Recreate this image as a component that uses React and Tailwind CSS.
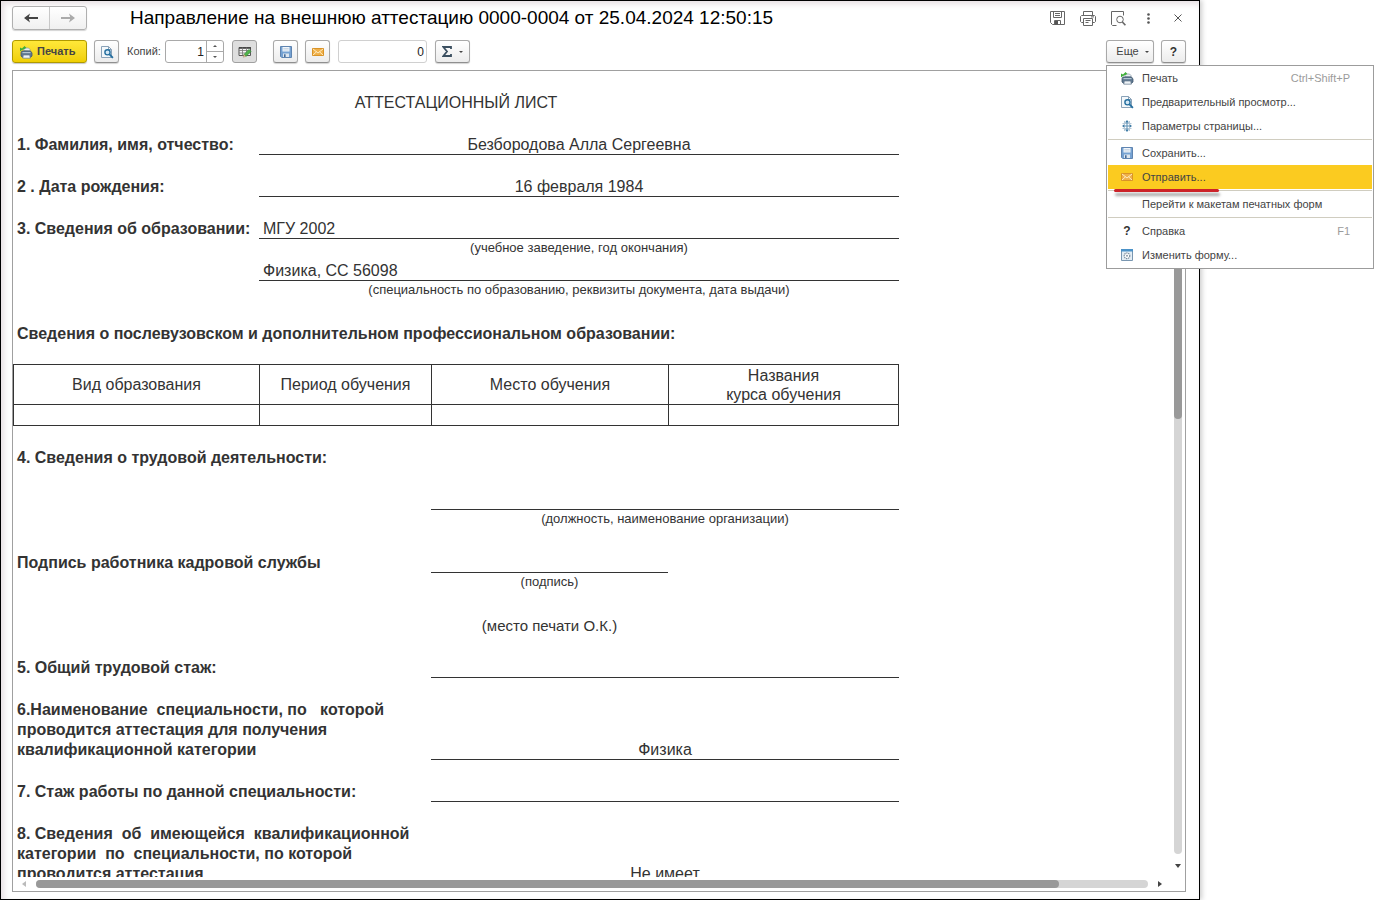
import { useState } from "react";

const toolButton =
  "flex h-[23px] items-center justify-center rounded-[3px] border border-[#a9a9a9] border-b-[#8f8f8f] bg-gradient-to-b from-white to-[#ececec] shadow-[0_1px_1px_#d4d4d4]";

function PrintIcon() {
  return (
    <svg width="14" height="14" viewBox="0 0 14 14" aria-hidden="true">
      <path d="M5 5.5V3h4.5L11 4.5v1.5z" fill="#e8eef3" stroke="#8a99a8" strokeWidth=".7" />
      <path d="M3 6h8.5l1.5 2v3l-1.4 1.3H3.4L2 11V7.5z" fill="#5f7890" stroke="#41586e" strokeWidth=".8" />
      <path d="M3.5 7.6h8" stroke="#b9cad8" strokeWidth="1.1" />
      <path d="M4.3 10h6.4l.6 3.2H3.8z" fill="#eef3f7" stroke="#64798d" strokeWidth=".7" />
      <path d="M1 2.6v4l1.6-1.3L7.4 3 5.6 1 3 3.6z" fill="#3fae3a" />
    </svg>
  );
}

function PreviewIcon() {
  return (
    <svg width="14" height="14" viewBox="0 0 14 14" aria-hidden="true">
      <path d="M1.5 1.5h7l3 3v8h-10z" fill="#f4f8fb" stroke="#8aa2b8" />
      <path d="M8.5 1.5v3h3" fill="none" stroke="#8aa2b8" />
      <circle cx="7.5" cy="7.3" r="2.6" fill="#d4e8f6" stroke="#256f9f" strokeWidth="1.4" />
      <path d="m9.5 9.4 3.4 3.4" stroke="#256f9f" strokeWidth="1.9" />
    </svg>
  );
}

function PageSetupIcon() {
  return (
    <svg width="12" height="14" viewBox="0 0 12 14" aria-hidden="true">
      <path d="M1.5 4.5h9M1.5 9.5h9M3.5 2v10M8.5 2v10" stroke="#b4c7d6" />
      <path d="M6 2v10M2 7h8" stroke="#5b8fb4" />
      <path d="m6 1 2 2.5H4zM6 13l2-2.5H4zM1 7l2-1.6v3.2zM11 7 9 5.4v3.2z" fill="#3e7ba5" />
    </svg>
  );
}

function DiskIcon() {
  return (
    <svg width="12" height="12" viewBox="0 0 12 12" aria-hidden="true">
      <path d="M.5.5h11v11H1.7L.5 10.3z" fill="#76a2d2" stroke="#5f84b0" />
      <path d="M2.5 1h7v4.5h-7z" fill="#f1f6fb" />
      <path d="M3.3 2.5h5.4M3.3 4h5.4" stroke="#b7c8da" strokeWidth=".7" />
      <path d="M3 7.5h6V11H3z" fill="#dde6ef" />
      <path d="M4 8.2h1.6V11H4z" fill="#466b98" />
    </svg>
  );
}

function MailIcon() {
  return (
    <svg width="12" height="10" viewBox="0 0 12 10" aria-hidden="true">
      <path d="M.5 1.5h11v7H.5z" fill="#efb04a" stroke="#d99327" />
      <path d="m1 2 5 4 5-4M1 8l3.5-3.2M11 8 7.5 4.8" fill="none" stroke="#fff0cd" strokeWidth=".9" />
    </svg>
  );
}

function EditTableIcon() {
  return (
    <svg width="14" height="12" viewBox="0 0 14 12" aria-hidden="true">
      <path d="M1 1.5h11.5v8H1z" fill="#f6f6f6" stroke="#555" />
      <path d="M1 2h12" stroke="#444" strokeWidth="1.6" />
      <path d="M1 4.5h11.5M1 7h11.5M4.5 1.5v8M8.5 1.5v8" stroke="#777" strokeWidth=".8" />
      <path d="m6 8.4 5-5 2 2-5 5z" fill="#4fb449" stroke="#2d8735" strokeWidth=".6" />
      <path d="m5.2 11.2.8-2.8 2 2z" fill="#f0cf9a" stroke="#8a7a5a" strokeWidth=".4" />
    </svg>
  );
}

function FormIcon() {
  return (
    <svg width="12" height="12" viewBox="0 0 12 12" aria-hidden="true">
      <path d="M.5.5h11v11H.5z" fill="#e3edf5" stroke="#7996b0" />
      <path d="M0 0h12v2.5H0z" fill="#4b92c8" />
      <circle cx="6" cy="6.8" r="2.8" fill="#fff" stroke="#7b8d9d" strokeWidth="1.2" strokeDasharray="1.4 .6" />
      <circle cx="6" cy="6.8" r="1" fill="#8999a7" />
    </svg>
  );
}

function Question() {
  return <span className="text-[12px] font-bold text-[#333]">?</span>;
}

const menuGroups = [
  [
    { text: "Печать", keys: "Ctrl+Shift+P", icon: <PrintIcon /> },
    { text: "Предварительный просмотр...", icon: <PreviewIcon /> },
    { text: "Параметры страницы...", icon: <PageSetupIcon /> },
  ],
  [
    { text: "Сохранить...", icon: <DiskIcon /> },
    { text: "Отправить...", icon: <MailIcon />, active: true },
  ],
  [{ text: "Перейти к макетам печатных форм" }],
  [
    { text: "Справка", keys: "F1", icon: <Question /> },
    { text: "Изменить форму...", icon: <FormIcon /> },
  ],
];

function MoreMenu() {
  return (
    <div className="absolute top-[25px] left-0 z-10 w-[268px] border border-[#9c9c9c] bg-white px-px pb-px">
      {menuGroups.map((group, i) => (
        <div key={i}>
          {i > 0 && (
            <div className="flex h-[3px] items-center">
              <div className="h-px w-full bg-[#d0cdc0]" />
            </div>
          )}
          {group.map((item) => (
            <button
              key={item.text}
              className={
                item.active
                  ? "relative flex h-6 w-full items-center bg-[#fbcb20] pr-[22px] text-left"
                  : "flex h-6 w-full items-center pr-[22px] text-left"
              }
            >
              <span className="flex w-[34px] justify-center pl-1">{item.icon}</span>
              <span className="flex-1">{item.text}</span>
              <span className="text-[#9b9b9b]">{item.keys}</span>
              {item.active && (
                <span className="absolute top-6 left-[6px] h-[3px] w-[105px] rounded-full bg-[#cc2229] shadow-[1px_4px_3px_rgba(0,0,0,0.35)]" />
              )}
            </button>
          ))}
        </div>
      ))}
    </div>
  );
}

function TitleBar() {
  return (
    <header className="flex h-6 items-center">
      <div className="flex h-6 w-[75px] rounded-[3px] border border-[#b0b0b0] bg-gradient-to-b from-white to-[#f0f0f0] shadow-[0_1px_1px_#d4d4d4]">
        <button aria-label="Назад" className="flex flex-1 items-center justify-center border-r border-[#c8c8c8]">
          <svg width="14" height="10" viewBox="0 0 14 10">
            <path d="M14 5H4" stroke="#444" strokeWidth="2" />
            <path d="M0 5 6 .5 4.5 5 6 9.5z" fill="#444" />
          </svg>
        </button>
        <button aria-label="Вперед" className="flex flex-1 items-center justify-center">
          <svg width="14" height="10" viewBox="0 0 14 10">
            <path d="M0 5h10" stroke="#aaa" strokeWidth="2" />
            <path d="M14 5 8 .5 9.5 5 8 9.5z" fill="#aaa" />
          </svg>
        </button>
      </div>
      <h1 className="ml-[43px] flex-1 text-[19px] leading-6 text-black">
        Направление на внешнюю аттестацию 0000-0004 от 25.04.2024 12:50:15
      </h1>
      <div className="flex items-center gap-[15px] pr-px">
        <button aria-label="Сохранить">
          <svg width="15" height="14" viewBox="0 0 15 14" fill="none" stroke="#666">
            <path d="M.5.5h14v13h-12l-2-2z" />
            <path d="M3.5.5v6h8v-6M5 2.5h5M5 4.5h5M4.5 13.5v-4h6v4" />
            <path d="M5 10h3v3.5H5z" fill="#555" stroke="none" />
          </svg>
        </button>
        <button aria-label="Печать">
          <svg width="16" height="15" viewBox="0 0 16 15" fill="none" stroke="#666">
            <path d="M3.5 4V.5h9V4M3.5 11.5h-2l-1-1v-5l1-1h13l1 1v5l-1 1h-2" />
            <path d="M3.5 7.5h9v7h-9zM5.5 9.5h5M5.5 11.5h3M11 5.9h3" />
          </svg>
        </button>
        <button aria-label="Предварительный просмотр">
          <svg width="15" height="15" viewBox="0 0 15 15" fill="none" stroke="#666">
            <path d="M5.5 14.5h-4l-1-1V.5h12v4" />
            <circle cx="9" cy="8.5" r="3.3" />
            <path d="m11.4 11 3 3.2" strokeWidth="1.6" />
          </svg>
        </button>
        <button aria-label="Ещё" className="flex w-[14px] justify-center">
          <svg width="3" height="11" viewBox="0 0 3 11" fill="#555">
            <circle cx="1.5" cy="1.5" r="1.3" />
            <circle cx="1.5" cy="5.5" r="1.3" />
            <circle cx="1.5" cy="9.5" r="1.3" />
          </svg>
        </button>
        <button aria-label="Закрыть" className="flex w-[15px] justify-center">
          <svg width="8" height="8" viewBox="0 0 8 8" stroke="#555">
            <path d="m.5.5 7 7M7.5.5l-7 7" />
          </svg>
        </button>
      </div>
    </header>
  );
}

function Toolbar() {
  const [copies, setCopies] = useState(1);
  const [menuOpen, setMenuOpen] = useState(true);

  return (
    <div className="mt-[10px] flex h-[23px] items-center text-[11px] text-[#444]">
      <button className="flex h-[23px] w-[75px] items-center gap-1 rounded-[3px] border border-[#b09a00] bg-gradient-to-b from-[#ffe838] to-[#f0cf00] pl-[6px] font-bold shadow-[0_1px_1px_#c8c8c8]">
        <PrintIcon />
        Печать
      </button>
      <button aria-label="Предварительный просмотр" className={`${toolButton} ml-[7px] w-[25px]`}>
        <PreviewIcon />
      </button>
      <label htmlFor="copies" className="ml-2 w-[38px]">
        Копий:
      </label>
      <div className="flex h-[23px] w-[59px] rounded-[3px] border border-[#a9a9a9] bg-white">
        <input
          id="copies"
          value={copies}
          onChange={(e) => setCopies(Number(e.target.value) || 1)}
          className="w-10 pr-[2px] text-right text-[12px] text-[#222] outline-none"
        />
        <div className="flex flex-1 flex-col border-l border-[#a9a9a9]">
          <button
            aria-label="Больше"
            onClick={() => setCopies(copies + 1)}
            className="flex flex-1 items-center justify-center border-b border-[#a9a9a9]"
          >
            <svg width="4" height="2" viewBox="0 0 4 2">
              <path d="M0 2 2 0l2 2z" fill="#555" />
            </svg>
          </button>
          <button
            aria-label="Меньше"
            onClick={() => setCopies(Math.max(1, copies - 1))}
            className="flex flex-1 items-center justify-center"
          >
            <svg width="4" height="2" viewBox="0 0 4 2">
              <path d="m0 0 2 2 2-2z" fill="#555" />
            </svg>
          </button>
        </div>
      </div>
      <button
        aria-label="Редактирование"
        className="ml-2 flex h-[23px] w-[25px] items-center justify-center rounded-[3px] border border-[#a0a0a0] bg-[#dedede]"
      >
        <EditTableIcon />
      </button>
      <button aria-label="Сохранить" className={`${toolButton} ml-4 w-[25px]`}>
        <DiskIcon />
      </button>
      <button aria-label="Отправить" className={`${toolButton} ml-[7px] w-[25px]`}>
        <MailIcon />
      </button>
      <input
        aria-label="Сумма"
        readOnly
        value="0"
        className="ml-2 h-[23px] w-[89px] rounded-[3px] border border-[#d0d0d0] bg-white pr-[2px] text-right text-[12px] text-[#222] outline-none"
      />
      <button aria-label="Сумма выделенных ячеек" className={`${toolButton} ml-2 w-[35px] gap-[7px]`}>
        <svg width="10" height="11" viewBox="0 0 10 11">
          <path d="M9 3V1H1.3L5 5.5 1.3 10H9V8" fill="none" stroke="#3b4f60" strokeWidth="1.8" />
        </svg>
        <svg width="4" height="2" viewBox="0 0 4 2">
          <path d="m0 0 2 2 2-2z" fill="#444" />
        </svg>
      </button>
      <div className="relative ml-auto">
        <button
          onClick={() => setMenuOpen(!menuOpen)}
          className={`${toolButton} w-12 gap-[6px] pl-[5px]`}
        >
          Еще
          <svg width="4" height="2" viewBox="0 0 4 2">
            <path d="m0 0 2 2 2-2z" fill="#444" />
          </svg>
        </button>
        {menuOpen && <MoreMenu />}
      </div>
      <button aria-label="Справка" className={`${toolButton} ml-[7px] w-[25px]`}>
        <Question />
      </button>
    </div>
  );
}

const row = "grid grid-cols-[246px_172px_237px_231px] items-end";
const line = "h-[21px] border-b border-[#333] leading-[22px]";
const caption = "h-[18px] text-center text-[13px] leading-[18px]";

function Sheet() {
  return (
    <div className="w-[886px] pt-[22px] text-[16px] leading-5 text-[#333]">
      <h2 className="text-center">АТТЕСТАЦИОННЫЙ ЛИСТ</h2>

      <div className={`${row} h-[42px]`}>
        <b className="pl-1">1. Фамилия, имя, отчество:</b>
        <span className={`${line} col-span-3 text-center`}>Безбородова Алла Сергеевна</span>
      </div>
      <div className={`${row} h-[42px]`}>
        <b className="pl-1">2 . Дата рождения:</b>
        <span className={`${line} col-span-3 text-center`}>16 февраля 1984</span>
      </div>
      <div className={`${row} h-[42px]`}>
        <b className="pl-1 whitespace-nowrap">3. Сведения об образовании:</b>
        <span className={`${line} col-span-3 pl-1`}>МГУ 2002</span>
      </div>
      <div className={row}>
        <span className={`${caption} col-span-3 col-start-2`}>(учебное заведение, год окончания)</span>
      </div>
      <div className={`${row} h-6`}>
        <span className={`${line} col-span-3 col-start-2 pl-1`}>Физика, СС 56098</span>
      </div>
      <div className={row}>
        <span className={`${caption} col-span-3 col-start-2`}>
          (специальность по образованию, реквизиты документа, дата выдачи)
        </span>
      </div>

      <h3 className="mt-[25px] pl-1 font-bold">
        Сведения о послевузовском и дополнительном профессиональном образовании:
      </h3>
      <table className="mt-5 w-full table-fixed border-collapse text-center leading-[19px]">
        <colgroup>
          <col className="w-[246px]" />
          <col className="w-[172px]" />
          <col className="w-[237px]" />
          <col />
        </colgroup>
        <thead>
          <tr className="h-10">
            <th className="border border-[#333] p-0 font-normal">Вид образования</th>
            <th className="border border-[#333] p-0 font-normal">Период обучения</th>
            <th className="border border-[#333] p-0 font-normal">Место обучения</th>
            <th className="border border-[#333] p-0 font-normal">
              Названия
              <br />
              курса обучения
            </th>
          </tr>
        </thead>
        <tbody>
          <tr className="h-[21px]">
            <td className="border border-[#333]" />
            <td className="border border-[#333]" />
            <td className="border border-[#333]" />
            <td className="border border-[#333]" />
          </tr>
        </tbody>
      </table>

      <h3 className="mt-[22px] pl-1 font-bold">4. Сведения о трудовой деятельности:</h3>
      <div className={`${row} h-[42px]`}>
        <span className={`${line} col-span-2 col-start-3`} />
      </div>
      <div className={row}>
        <span className={`${caption} col-span-2 col-start-3`}>(должность, наименование организации)</span>
      </div>
      <div className={`${row} h-[45px]`}>
        <b className="col-span-2 pl-1">Подпись работника кадровой службы</b>
        <span className={line} />
      </div>
      <div className={row}>
        <span className={`${caption} col-start-3`}>(подпись)</span>
      </div>
      <div className={`${row} h-[45px]`}>
        <span className="col-start-3 text-center text-[15px] leading-5">(место печати О.К.)</span>
      </div>
      <div className={`${row} h-[42px]`}>
        <b className="col-span-2 pl-1">5. Общий трудовой стаж:</b>
        <span className={`${line} col-span-2`} />
      </div>
      <div className={`${row} h-[82px]`}>
        <b className="col-span-2 pl-1 whitespace-pre">
          {"6.Наименование  специальности, по   которой\nпроводится аттестация для получения\nквалификационной категории"}
        </b>
        <span className={`${line} col-span-2 text-center`}>Физика</span>
      </div>
      <div className={`${row} h-[42px]`}>
        <b className="col-span-2 pl-1">7. Стаж работы по данной специальности:</b>
        <span className={`${line} col-span-2`} />
      </div>
      <div className={`${row} h-[82px]`}>
        <b className="col-span-2 pl-1 whitespace-pre">
          {"8. Сведения  об  имеющейся  квалификационной\nкатегории  по  специальности, по которой\nпроводится аттестация"}
        </b>
        <span className={`${line} col-span-2 text-center`}>Не имеет</span>
      </div>
    </div>
  );
}

export default function App() {
  return (
    <div className="h-screen overflow-hidden bg-white pr-[174px] font-['Liberation_Sans',Arial,sans-serif]">
      <div className="flex h-full flex-col border border-black bg-white pt-[5px] pr-[13px] pb-[7px] pl-[11px] shadow-[2px_0_5px_rgba(0,0,0,0.2),inset_3px_3px_6px_#e6dfe2]">
        <TitleBar />
        <Toolbar />
        <main className="mt-[7px] flex min-h-0 flex-1 flex-col border border-[#a0a0a0]">
          <div className="flex min-h-0 flex-1">
            <div className="min-w-0 flex-1 overflow-hidden">
              <Sheet />
            </div>
            <div className="flex w-[15px] flex-col items-center pt-5 pb-[9px]">
              <div className="w-2 flex-1 rounded-full bg-[#d5d5d5]">
                <div className="h-[43%] rounded-full bg-[#999]" />
              </div>
              <svg className="mt-[10px]" width="6" height="4" viewBox="0 0 6 4">
                <path d="M0 0h6L3 4z" fill="#444" />
              </svg>
            </div>
          </div>
          <div className="flex h-[14px] items-center pr-[23px] pl-[9px]">
            <svg width="4" height="6" viewBox="0 0 4 6">
              <path d="M4 0v6L0 3z" fill="#bbb" />
            </svg>
            <div className="mx-[10px] h-2 flex-1 rounded-full bg-[#d5d5d5]">
              <div className="h-2 w-[92%] rounded-full bg-[#999]" />
            </div>
            <svg width="4" height="6" viewBox="0 0 4 6">
              <path d="M0 0v6l4-3z" fill="#444" />
            </svg>
          </div>
        </main>
      </div>
    </div>
  );
}
